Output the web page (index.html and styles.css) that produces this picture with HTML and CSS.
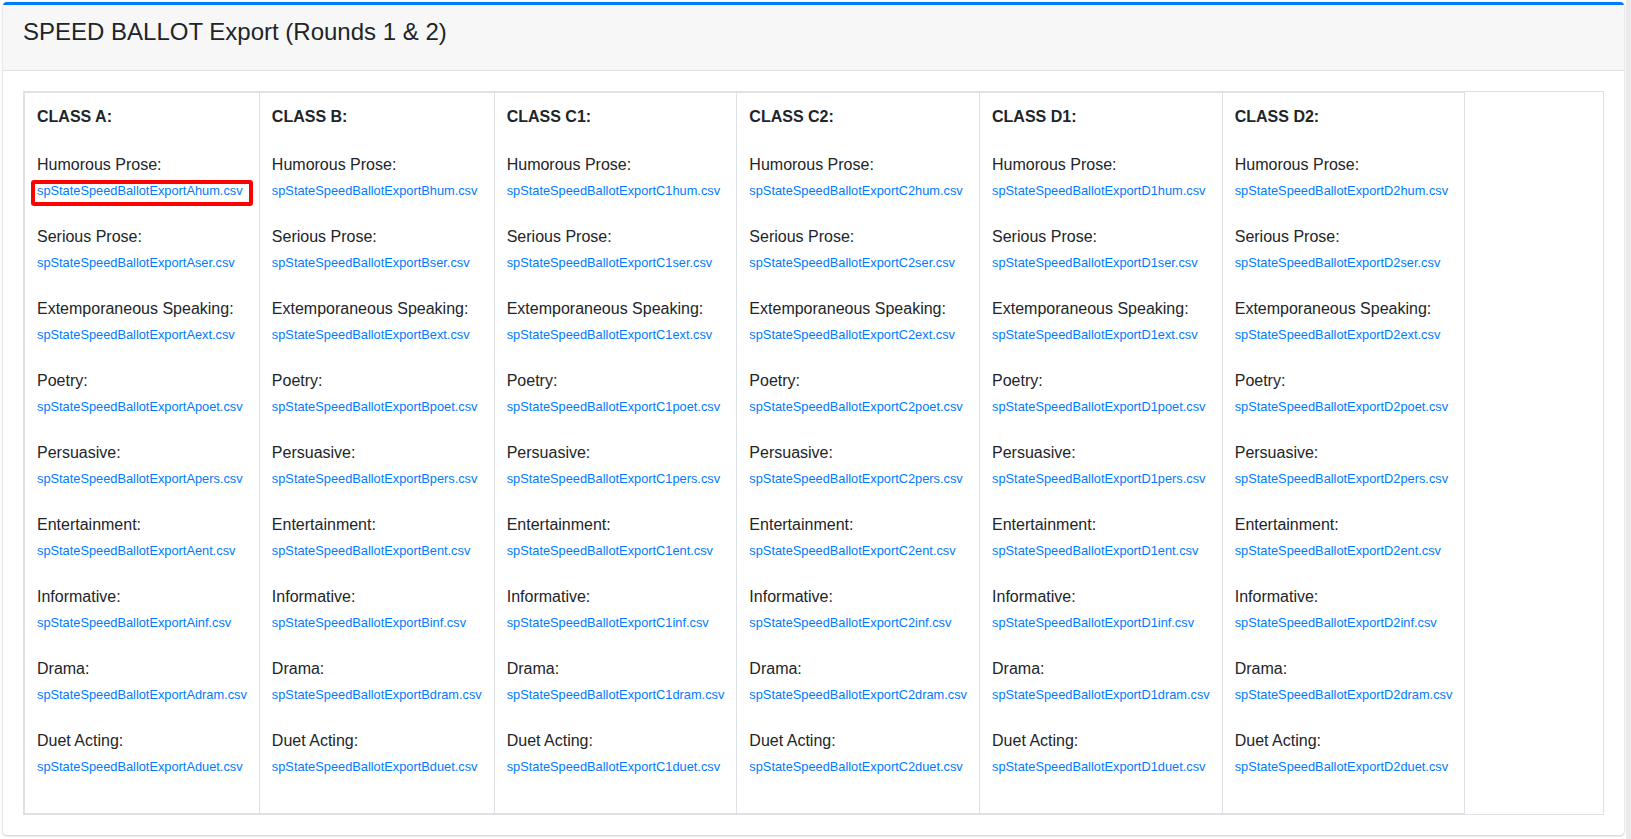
FILE: index.html
```html
<!DOCTYPE html>
<html lang="en">
<head>
<meta charset="utf-8">
<title>SPEED BALLOT Export (Rounds 1 &amp; 2)</title>
<link rel="stylesheet" href="styles.css">
</head>
<body>
<div class="page">
  <div class="card">
    <div class="card-header">
      <h3 class="card-title">SPEED BALLOT Export (Rounds 1 &amp; 2)</h3>
    </div>
    <div class="card-body">
      <div class="tbl-wrap">
        <table class="grid">
          <tr>
            <td>
              <div class="cls">CLASS A:</div>
              <div class="item"><div class="label">Humorous Prose:</div><a class="file marked" href="#">spStateSpeedBallotExportAhum.csv</a></div>
              <div class="item"><div class="label">Serious Prose:</div><a class="file" href="#">spStateSpeedBallotExportAser.csv</a></div>
              <div class="item"><div class="label">Extemporaneous Speaking:</div><a class="file" href="#">spStateSpeedBallotExportAext.csv</a></div>
              <div class="item"><div class="label">Poetry:</div><a class="file" href="#">spStateSpeedBallotExportApoet.csv</a></div>
              <div class="item"><div class="label">Persuasive:</div><a class="file" href="#">spStateSpeedBallotExportApers.csv</a></div>
              <div class="item"><div class="label">Entertainment:</div><a class="file" href="#">spStateSpeedBallotExportAent.csv</a></div>
              <div class="item"><div class="label">Informative:</div><a class="file" href="#">spStateSpeedBallotExportAinf.csv</a></div>
              <div class="item"><div class="label">Drama:</div><a class="file" href="#">spStateSpeedBallotExportAdram.csv</a></div>
              <div class="item"><div class="label">Duet Acting:</div><a class="file" href="#">spStateSpeedBallotExportAduet.csv</a></div>
            </td>
            <td>
              <div class="cls">CLASS B:</div>
              <div class="item"><div class="label">Humorous Prose:</div><a class="file" href="#">spStateSpeedBallotExportBhum.csv</a></div>
              <div class="item"><div class="label">Serious Prose:</div><a class="file" href="#">spStateSpeedBallotExportBser.csv</a></div>
              <div class="item"><div class="label">Extemporaneous Speaking:</div><a class="file" href="#">spStateSpeedBallotExportBext.csv</a></div>
              <div class="item"><div class="label">Poetry:</div><a class="file" href="#">spStateSpeedBallotExportBpoet.csv</a></div>
              <div class="item"><div class="label">Persuasive:</div><a class="file" href="#">spStateSpeedBallotExportBpers.csv</a></div>
              <div class="item"><div class="label">Entertainment:</div><a class="file" href="#">spStateSpeedBallotExportBent.csv</a></div>
              <div class="item"><div class="label">Informative:</div><a class="file" href="#">spStateSpeedBallotExportBinf.csv</a></div>
              <div class="item"><div class="label">Drama:</div><a class="file" href="#">spStateSpeedBallotExportBdram.csv</a></div>
              <div class="item"><div class="label">Duet Acting:</div><a class="file" href="#">spStateSpeedBallotExportBduet.csv</a></div>
            </td>
            <td>
              <div class="cls">CLASS C1:</div>
              <div class="item"><div class="label">Humorous Prose:</div><a class="file" href="#">spStateSpeedBallotExportC1hum.csv</a></div>
              <div class="item"><div class="label">Serious Prose:</div><a class="file" href="#">spStateSpeedBallotExportC1ser.csv</a></div>
              <div class="item"><div class="label">Extemporaneous Speaking:</div><a class="file" href="#">spStateSpeedBallotExportC1ext.csv</a></div>
              <div class="item"><div class="label">Poetry:</div><a class="file" href="#">spStateSpeedBallotExportC1poet.csv</a></div>
              <div class="item"><div class="label">Persuasive:</div><a class="file" href="#">spStateSpeedBallotExportC1pers.csv</a></div>
              <div class="item"><div class="label">Entertainment:</div><a class="file" href="#">spStateSpeedBallotExportC1ent.csv</a></div>
              <div class="item"><div class="label">Informative:</div><a class="file" href="#">spStateSpeedBallotExportC1inf.csv</a></div>
              <div class="item"><div class="label">Drama:</div><a class="file" href="#">spStateSpeedBallotExportC1dram.csv</a></div>
              <div class="item"><div class="label">Duet Acting:</div><a class="file" href="#">spStateSpeedBallotExportC1duet.csv</a></div>
            </td>
            <td>
              <div class="cls">CLASS C2:</div>
              <div class="item"><div class="label">Humorous Prose:</div><a class="file" href="#">spStateSpeedBallotExportC2hum.csv</a></div>
              <div class="item"><div class="label">Serious Prose:</div><a class="file" href="#">spStateSpeedBallotExportC2ser.csv</a></div>
              <div class="item"><div class="label">Extemporaneous Speaking:</div><a class="file" href="#">spStateSpeedBallotExportC2ext.csv</a></div>
              <div class="item"><div class="label">Poetry:</div><a class="file" href="#">spStateSpeedBallotExportC2poet.csv</a></div>
              <div class="item"><div class="label">Persuasive:</div><a class="file" href="#">spStateSpeedBallotExportC2pers.csv</a></div>
              <div class="item"><div class="label">Entertainment:</div><a class="file" href="#">spStateSpeedBallotExportC2ent.csv</a></div>
              <div class="item"><div class="label">Informative:</div><a class="file" href="#">spStateSpeedBallotExportC2inf.csv</a></div>
              <div class="item"><div class="label">Drama:</div><a class="file" href="#">spStateSpeedBallotExportC2dram.csv</a></div>
              <div class="item"><div class="label">Duet Acting:</div><a class="file" href="#">spStateSpeedBallotExportC2duet.csv</a></div>
            </td>
            <td>
              <div class="cls">CLASS D1:</div>
              <div class="item"><div class="label">Humorous Prose:</div><a class="file" href="#">spStateSpeedBallotExportD1hum.csv</a></div>
              <div class="item"><div class="label">Serious Prose:</div><a class="file" href="#">spStateSpeedBallotExportD1ser.csv</a></div>
              <div class="item"><div class="label">Extemporaneous Speaking:</div><a class="file" href="#">spStateSpeedBallotExportD1ext.csv</a></div>
              <div class="item"><div class="label">Poetry:</div><a class="file" href="#">spStateSpeedBallotExportD1poet.csv</a></div>
              <div class="item"><div class="label">Persuasive:</div><a class="file" href="#">spStateSpeedBallotExportD1pers.csv</a></div>
              <div class="item"><div class="label">Entertainment:</div><a class="file" href="#">spStateSpeedBallotExportD1ent.csv</a></div>
              <div class="item"><div class="label">Informative:</div><a class="file" href="#">spStateSpeedBallotExportD1inf.csv</a></div>
              <div class="item"><div class="label">Drama:</div><a class="file" href="#">spStateSpeedBallotExportD1dram.csv</a></div>
              <div class="item"><div class="label">Duet Acting:</div><a class="file" href="#">spStateSpeedBallotExportD1duet.csv</a></div>
            </td>
            <td>
              <div class="cls">CLASS D2:</div>
              <div class="item"><div class="label">Humorous Prose:</div><a class="file" href="#">spStateSpeedBallotExportD2hum.csv</a></div>
              <div class="item"><div class="label">Serious Prose:</div><a class="file" href="#">spStateSpeedBallotExportD2ser.csv</a></div>
              <div class="item"><div class="label">Extemporaneous Speaking:</div><a class="file" href="#">spStateSpeedBallotExportD2ext.csv</a></div>
              <div class="item"><div class="label">Poetry:</div><a class="file" href="#">spStateSpeedBallotExportD2poet.csv</a></div>
              <div class="item"><div class="label">Persuasive:</div><a class="file" href="#">spStateSpeedBallotExportD2pers.csv</a></div>
              <div class="item"><div class="label">Entertainment:</div><a class="file" href="#">spStateSpeedBallotExportD2ent.csv</a></div>
              <div class="item"><div class="label">Informative:</div><a class="file" href="#">spStateSpeedBallotExportD2inf.csv</a></div>
              <div class="item"><div class="label">Drama:</div><a class="file" href="#">spStateSpeedBallotExportD2dram.csv</a></div>
              <div class="item"><div class="label">Duet Acting:</div><a class="file" href="#">spStateSpeedBallotExportD2duet.csv</a></div>
            </td>
          </tr>
        </table>
      </div>
    </div>
  </div>
</div>
</body>
</html>
```
FILE: styles.css
```css
* { box-sizing: border-box; }

html, body {
  margin: 0;
  padding: 0;
}

body {
  font-family: "Liberation Sans", Arial, Helvetica, sans-serif;
  font-size: 16px;
  line-height: 1.5;
  color: #212529;
  background: linear-gradient(to right, #ffffff calc(100% - 5px), #ebebeb calc(100% - 5px));
}

.page {
  padding: 2px 7px 2px 3px;
}

.card {
  background: #fff;
  border-top: 3px solid #007bff;
  border-radius: 4px;
  box-shadow: 0 0 1px rgba(0, 0, 0, 0.125), 0 1px 3px rgba(0, 0, 0, 0.2);
}

.card-header {
  background: #f7f7f7;
  border-bottom: 1px solid #dfdfdf;
  padding: 12px 20px 24px;
}

.card-title {
  margin: 0;
  font-size: 24px;
  font-weight: 400;
  line-height: 29px;
  color: #212529;
}

.card-body {
  padding: 20px;
}

.tbl-wrap {
  border: 1px solid #dee2e6;
}

.grid {
  border-collapse: collapse;
}

.grid td {
  border: 1px solid #dee2e6;
  padding: 12px;
  vertical-align: top;
  text-align: left;
}

.cls {
  font-weight: 700;
  line-height: 24px;
  margin-bottom: 24px;
}

.item {
  margin-bottom: 24px;
}

.label {
  line-height: 24px;
  white-space: nowrap;
}

.file {
  display: block;
  font-size: 12.8px;
  line-height: 21px;
  padding-top: 3px;
  color: #007bff;
  text-decoration: none;
  white-space: nowrap;
}

.marked {
  position: relative;
}

.marked::after {
  content: "";
  position: absolute;
  top: 3px;
  bottom: -5px;
  left: -6px;
  right: -6px;
  border: 4px solid #ff0000;
  border-radius: 3px;
  pointer-events: none;
}
```
